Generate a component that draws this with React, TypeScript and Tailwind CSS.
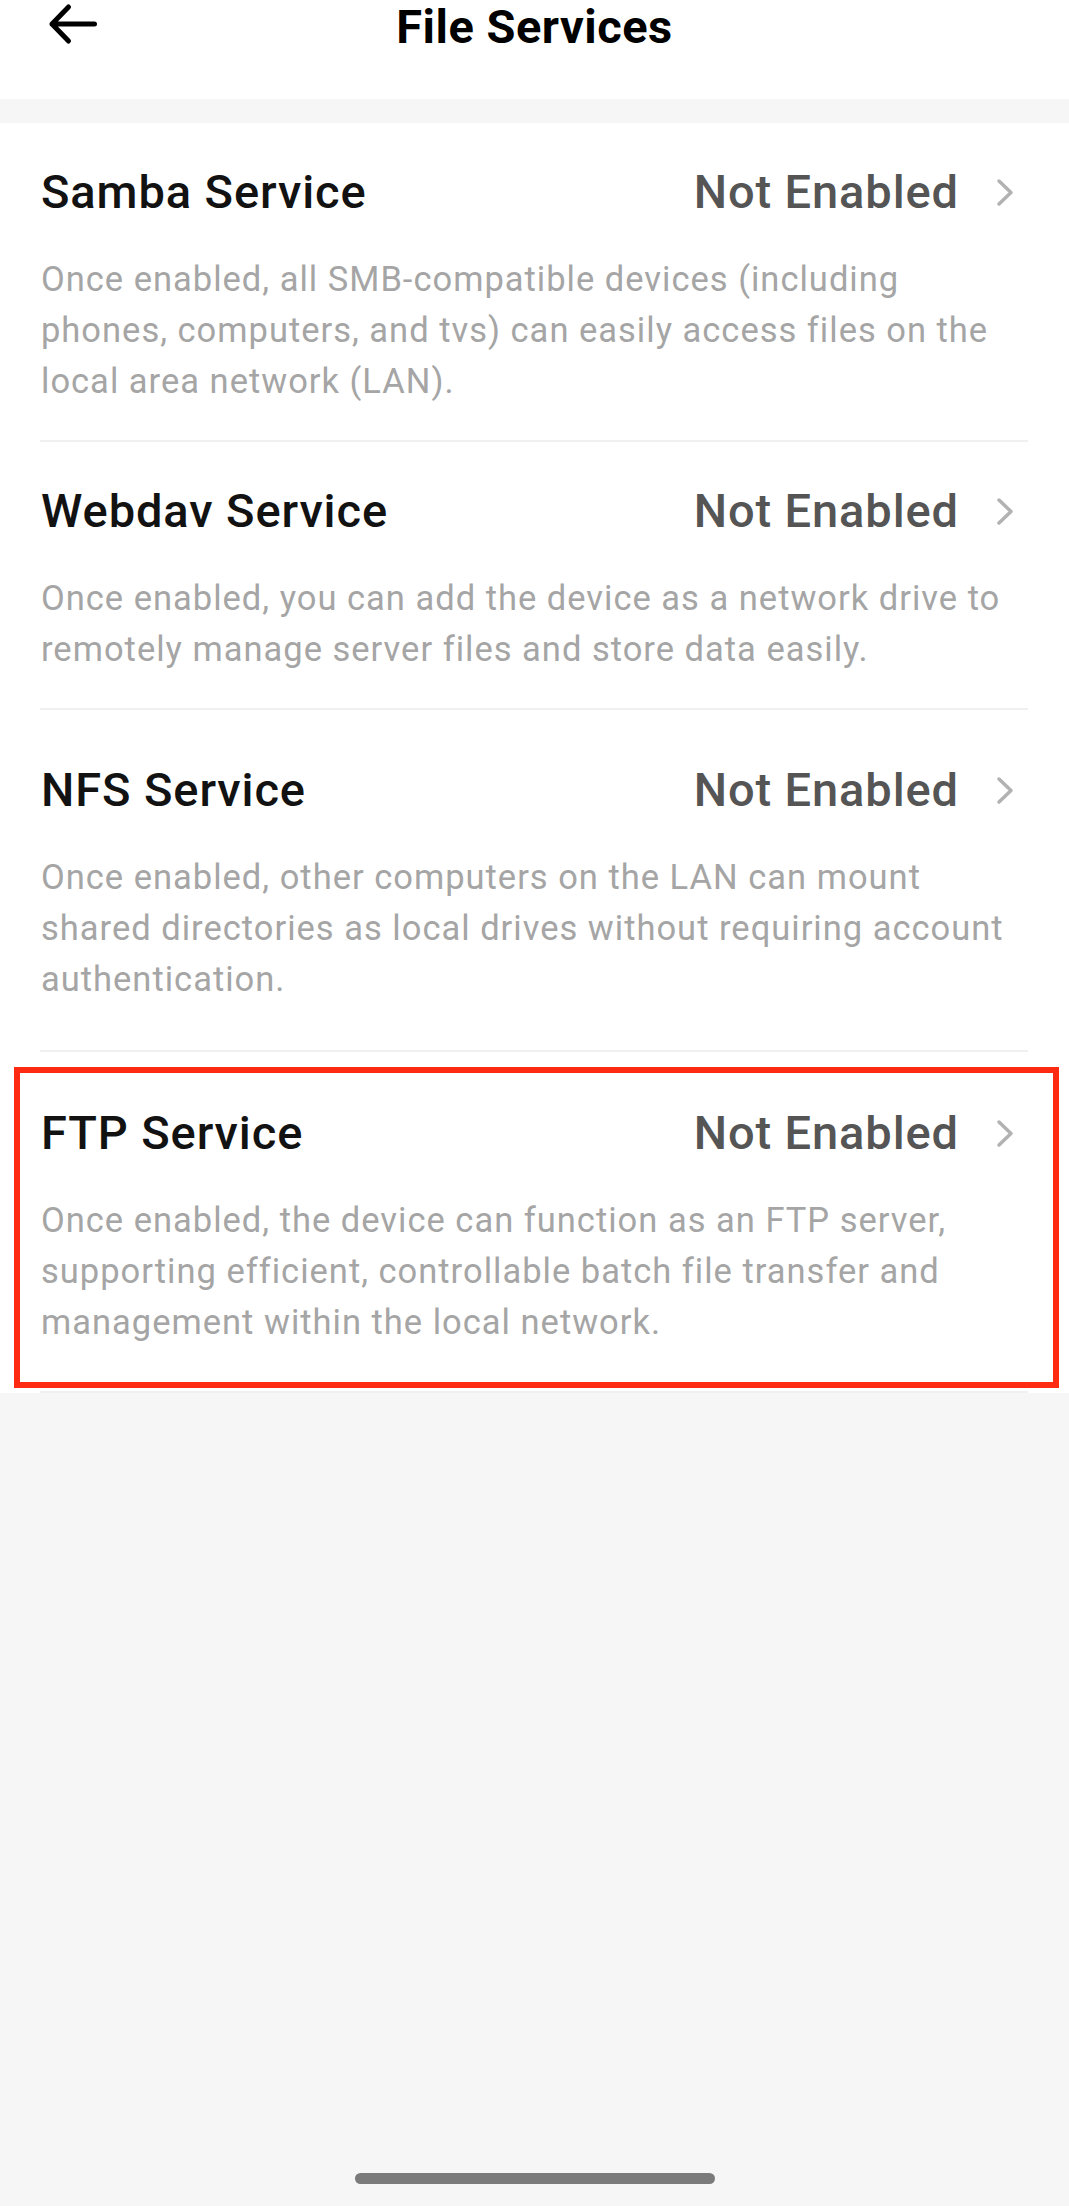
const services = [
  {
    name: "Samba Service",
    desc: "Once enabled, all SMB-compatible devices (including phones, computers, and tvs) can easily access files on the local area network (LAN).",
    pad: "pt-[41px] pb-[33px]",
  },
  {
    name: "Webdav Service",
    desc: "Once enabled, you can add the device as a network drive to remotely manage server files and store data easily.",
    pad: "pt-[41px] pb-[33px]",
  },
  {
    name: "NFS Service",
    desc: "Once enabled, other computers on the LAN can mount shared directories as local drives without requiring account authentication.",
    pad: "pt-[52px] pb-[45px]",
  },
  {
    name: "FTP Service",
    desc: "Once enabled, the device can function as an FTP server, supporting efficient, controllable batch file transfer and management within the local network.",
    pad: "pt-[53px] pb-[43px]",
    marked: true,
  },
];

function BackArrow() {
  return (
    <svg width="52" height="44" viewBox="0 0 52 44" fill="none">
      <path
        d="M20.5 5 L4 22 L20.5 39 M4 22 H46.5"
        stroke="#000"
        strokeWidth="5"
        strokeLinecap="round"
        strokeLinejoin="round"
      />
    </svg>
  );
}

function Chevron() {
  return (
    <svg width="18" height="29" viewBox="0 0 18 29" fill="none">
      <path d="M3 3 L15 14.5 L3 26" stroke="#b2b2b2" strokeWidth="3.5" strokeLinecap="round" strokeLinejoin="round" />
    </svg>
  );
}

function ServiceRow({ name, desc, pad }: { name: string; desc: string; pad: string }) {
  return (
    <div className={`ml-[40px] mr-[41px] border-b-2 border-[#f0f0f0] ${pad}`}>
      <div className="flex items-center pl-[1px] pr-[14px]">
        <span className="flex-1 text-[47px] leading-[56px] font-medium tracking-[0.9px] text-[#121212]">{name}</span>
        <span className="text-[47px] leading-[56px] font-medium tracking-[0.9px] text-[#555555]">Not Enabled</span>
        <span className="ml-[37px] flex items-center">
          <Chevron />
        </span>
      </div>
      <p className="mt-[34px] pl-[1px] pr-[16px] text-[34.5px] leading-[51px] tracking-[1px] text-[#a5a5a5]">
        {desc}
      </p>
    </div>
  );
}

export default function App() {
  return (
    <div
      className="flex min-h-[2206px] flex-col bg-[#f6f6f6]"
      style={{ fontFamily: "Roboto, 'Noto Sans', sans-serif" }}
    >
      {/* header */}
      <div className="grid h-[99px] grid-cols-[1fr_auto_1fr] items-start bg-white">
        <div className="pl-[48px] pt-[2px]">
          <BackArrow />
        </div>
        <h1 className="-mt-[1px] text-[47px] leading-[56px] font-bold tracking-[0.5px] text-black">File Services</h1>
        <div />
      </div>

      {/* service list */}
      <div className="mt-[24px] bg-white">
        {services.map((s) =>
          s.marked ? (
            <div key={s.name} className="relative">
              <ServiceRow name={s.name} desc={s.desc} pad={s.pad} />
              <div className="pointer-events-none absolute left-[14px] top-[15px] h-[321px] w-[1045px] border-[6px] border-[#ff2a12]" />
            </div>
          ) : (
            <ServiceRow key={s.name} name={s.name} desc={s.desc} pad={s.pad} />
          )
        )}
      </div>

      <div className="flex-1" />
      <div className="mb-[22px] flex justify-center">
        <div className="h-[11px] w-[360px] rounded-full bg-[#7b7b7b]" />
      </div>
    </div>
  );
}
